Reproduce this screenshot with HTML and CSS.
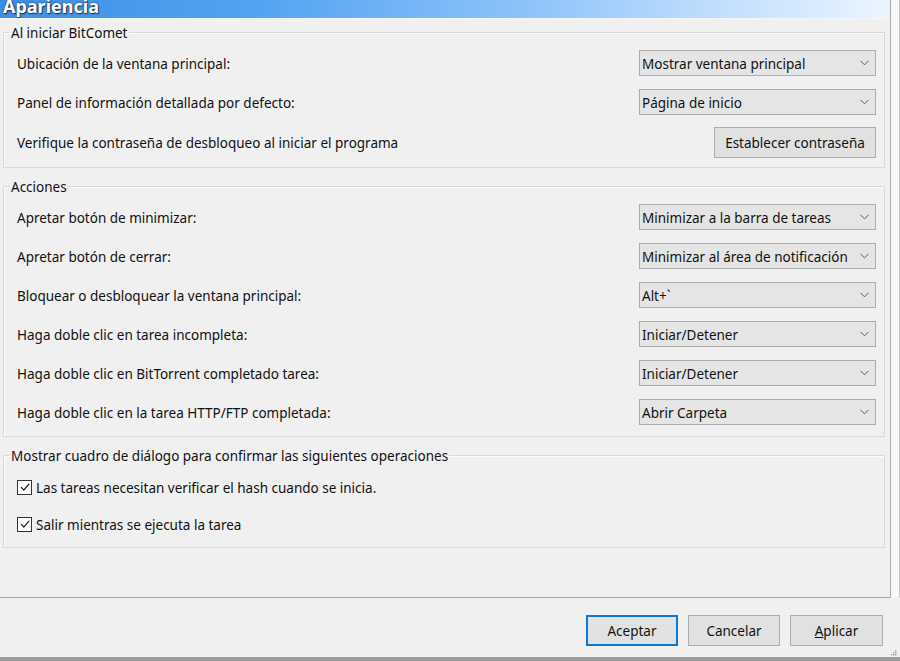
FILE: index.html
```html
<!DOCTYPE html>
<html lang="es">
<head>
<meta charset="utf-8">
<title>Apariencia</title>
<link rel="stylesheet" href="styles.css">
</head>
<body>
<div class="window">
  <div class="top">
    <div class="main">
      <div class="titlebar"><h1 class="title">Apariencia</h1></div>
      <div class="panel">
        <fieldset class="group g1">
          <legend>Al iniciar BitComet</legend>
          <div class="rows">
            <div class="row">
              <span class="label">Ubicación de la ventana principal:</span>
              <div class="combo"><span class="val">Mostrar ventana principal</span><svg class="chev" width="9" height="6" viewBox="0 0 9 6"><polyline points="0.5,0.8 4.5,4.8 8.5,0.8" fill="none" stroke="#5a5a5a" stroke-width="1"/></svg></div>
            </div>
            <div class="row">
              <span class="label">Panel de información detallada por defecto:</span>
              <div class="combo"><span class="val">Página de inicio</span><svg class="chev" width="9" height="6" viewBox="0 0 9 6"><polyline points="0.5,0.8 4.5,4.8 8.5,0.8" fill="none" stroke="#5a5a5a" stroke-width="1"/></svg></div>
            </div>
            <div class="row row-btn">
              <span class="label">Verifique la contraseña de desbloqueo al iniciar el programa</span>
              <button class="btn btn-pass" type="button">Establecer contraseña</button>
            </div>
          </div>
        </fieldset>

        <fieldset class="group g2">
          <legend>Acciones</legend>
          <div class="rows">
            <div class="row">
              <span class="label">Apretar botón de minimizar:</span>
              <div class="combo"><span class="val">Minimizar a la barra de tareas</span><svg class="chev" width="9" height="6" viewBox="0 0 9 6"><polyline points="0.5,0.8 4.5,4.8 8.5,0.8" fill="none" stroke="#5a5a5a" stroke-width="1"/></svg></div>
            </div>
            <div class="row">
              <span class="label">Apretar botón de cerrar:</span>
              <div class="combo"><span class="val">Minimizar al área de notificación</span><svg class="chev" width="9" height="6" viewBox="0 0 9 6"><polyline points="0.5,0.8 4.5,4.8 8.5,0.8" fill="none" stroke="#5a5a5a" stroke-width="1"/></svg></div>
            </div>
            <div class="row">
              <span class="label">Bloquear o desbloquear la ventana principal:</span>
              <div class="combo"><span class="val">Alt+`</span><svg class="chev" width="9" height="6" viewBox="0 0 9 6"><polyline points="0.5,0.8 4.5,4.8 8.5,0.8" fill="none" stroke="#5a5a5a" stroke-width="1"/></svg></div>
            </div>
            <div class="row">
              <span class="label">Haga doble clic en tarea incompleta:</span>
              <div class="combo"><span class="val">Iniciar/Detener</span><svg class="chev" width="9" height="6" viewBox="0 0 9 6"><polyline points="0.5,0.8 4.5,4.8 8.5,0.8" fill="none" stroke="#5a5a5a" stroke-width="1"/></svg></div>
            </div>
            <div class="row">
              <span class="label">Haga doble clic en BitTorrent completado tarea:</span>
              <div class="combo"><span class="val">Iniciar/Detener</span><svg class="chev" width="9" height="6" viewBox="0 0 9 6"><polyline points="0.5,0.8 4.5,4.8 8.5,0.8" fill="none" stroke="#5a5a5a" stroke-width="1"/></svg></div>
            </div>
            <div class="row">
              <span class="label">Haga doble clic en la tarea HTTP/FTP completada:</span>
              <div class="combo"><span class="val">Abrir Carpeta</span><svg class="chev" width="9" height="6" viewBox="0 0 9 6"><polyline points="0.5,0.8 4.5,4.8 8.5,0.8" fill="none" stroke="#5a5a5a" stroke-width="1"/></svg></div>
            </div>
          </div>
        </fieldset>

        <fieldset class="group g3">
          <legend>Mostrar cuadro de diálogo para confirmar las siguientes operaciones</legend>
          <div class="rows checks">
            <label class="check"><span class="box"><svg width="12" height="12" viewBox="0 0 12 12"><polyline points="2,6.2 4.8,9 10.2,2.8" fill="none" stroke="#222" stroke-width="1.2"/></svg></span><span class="val">Las tareas necesitan verificar el hash cuando se inicia.</span></label>
            <label class="check"><span class="box"><svg width="12" height="12" viewBox="0 0 12 12"><polyline points="2,6.2 4.8,9 10.2,2.8" fill="none" stroke="#222" stroke-width="1.2"/></svg></span><span class="val">Salir mientras se ejecuta la tarea</span></label>
          </div>
        </fieldset>
      </div>
    </div>
    <div class="strip"></div>
  </div>
  <div class="footer">
    <button class="btn btn-default" type="button">Aceptar</button>
    <button class="btn" type="button">Cancelar</button>
    <button class="btn" type="button"><u>A</u>plicar</button>
    <svg class="grip" width="7" height="7" viewBox="0 0 7 7"><rect x="5" y="1" width="1.5" height="1.5" fill="#aaa"/><rect x="3" y="3" width="1.5" height="1.5" fill="#aaa"/><rect x="5" y="3" width="1.5" height="1.5" fill="#aaa"/><rect x="1" y="5" width="1.5" height="1.5" fill="#aaa"/><rect x="3" y="5" width="1.5" height="1.5" fill="#aaa"/><rect x="5" y="5" width="1.5" height="1.5" fill="#aaa"/></svg>
  </div>
</div>
</body>
</html>
```
FILE: styles.css
```css
* { box-sizing: border-box; }
html, body { margin: 0; padding: 0; }
body {
  background: #f0f0f0;
  font-family: "Noto Sans", "Open Sans", sans-serif;
  font-size: 13.5px;
  color: #111;
}
.window {
  width: 900px;
  height: 661px;
  display: flex;
  flex-direction: column;
  overflow: hidden;
}
.top {
  flex: 1;
  display: flex;
  min-height: 0;
}
.main {
  width: 891px;
  display: flex;
  flex-direction: column;
  border-right: 1px solid #a9a9a9;
  border-bottom: 1px solid #a6a6a6;
}
.strip {
  flex: 1;
  background: #f7f7f7;
  border-right: 1px solid #c4c4c4;
}
.titlebar {
  height: 18px;
  overflow: hidden;
  background: linear-gradient(to right, #3e8ee6 0%, #55a4f2 30%, #8fc4fa 60%, #c4e0fd 82%, #ecf5ff 100%);
  padding-left: 3px;
}
.title {
  margin: 0;
  font-family: "Noto Sans", sans-serif;
  font-weight: 700;
  font-size: 18px;
  line-height: 13px;
  color: #fff;
  text-shadow: 0 0 2px #1b2a3a, 1px 1px 1px rgba(0,0,0,0.55);
}
.panel {
  flex: 1;
  padding: 5px 5px 0 3px;
  box-shadow: inset 0 1px 0 #f6f6f6;
}
.group {
  margin: 0;
  min-width: 0;
  border: 1px solid #d9d9d9;
  box-shadow: inset 1px 1px 0 #fbfbfb;
  padding: 9px 8px 9px 13px;
}
.group legend {
  margin-left: -7px;
  padding: 1px 1px 0;
  line-height: 18px;
  height: 18px;
  color: #111;
}
.g2, .g3 { margin-top: 9px; }
.g2 { padding-bottom: 11px; }
.g3 { padding-top: 11px; padding-bottom: 11px; }
.rows {
  display: flex;
  flex-direction: column;
  gap: 13px;
}
.row {
  height: 26px;
  display: flex;
  align-items: center;
  justify-content: space-between;
}
.row-btn {
  height: 31px;
  margin-top: -1px;
}
.label, .val {
  white-space: nowrap;
  padding-top: 1px;
}
.combo {
  width: 237px;
  height: 26px;
  background: #e5e5e5;
  border: 1px solid #acacac;
  display: flex;
  align-items: center;
  justify-content: space-between;
  padding: 0 6px 0 2px;
  white-space: nowrap;
}
.chev { flex: none; }
.btn {
  font-family: inherit;
  font-size: 13.5px;
  color: #111;
  background: #e1e1e1;
  border: 1px solid #adadad;
  height: 31px;
  padding: 1px 0 0;
  margin: 0;
}
.btn-pass { width: 162px; }
.checks { gap: 13px; }
.check {
  height: 24px;
  display: flex;
  align-items: center;
  white-space: nowrap;
}
.box {
  width: 15px;
  height: 15px;
  border: 1px solid #333;
  background: #fff;
  margin-right: 4px;
  display: flex;
  align-items: center;
  justify-content: center;
}
.footer {
  height: 63px;
  display: flex;
  justify-content: flex-end;
  align-items: flex-start;
  gap: 10px;
  padding: 17px 3px 0 0;
  border-bottom: 4px solid #9d9d9d;
}
.footer .btn { width: 92px; }
.footer .btn:last-of-type { width: 93px; }
.btn-default { border: 2px solid #0a78d4; }
.grip { align-self: flex-end; margin-bottom: 1px; margin-left: -3px; }
```
